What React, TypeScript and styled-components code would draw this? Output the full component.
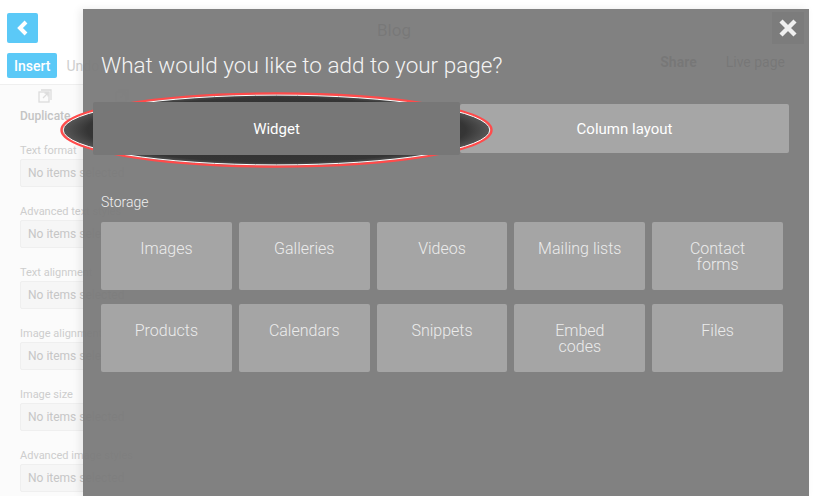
import React from 'react';
import styled, { createGlobalStyle } from 'styled-components';

const GlobalStyle = createGlobalStyle`
  html, body {
    margin: 0;
    padding: 0;
    background: #ffffff;
    font-family: Roboto, "Liberation Sans", Arial, sans-serif;
  }
`;

const Page = styled.div`
  position: relative;
  width: 813px;
  height: 496px;
  overflow: hidden;
  display: flex;
  background: #ffffff;
`;

const Sidebar = styled.div`
  width: 200px;
  flex-shrink: 0;
  background: #fbfbfb;
  display: flex;
  flex-direction: column;
`;

const SidebarTop = styled.div`
  background: #ffffff;
  padding: 13px 0 6px 7px;
  border-bottom: 1px solid #efefef;
  display: flex;
  flex-direction: column;
  gap: 10px;
`;

const BackButton = styled.div`
  width: 31px;
  height: 30px;
  border-radius: 2px;
  background: #5bc9f7;
  display: flex;
  align-items: center;
  justify-content: center;
`;

const ToolRow = styled.div`
  display: flex;
  align-items: center;
  gap: 9px;
`;

const InsertButton = styled.div`
  height: 25px;
  padding: 0 7px;
  border-radius: 2px;
  background: #5bc9f7;
  color: #ffffff;
  font-size: 14px;
  font-weight: 500;
  display: flex;
  align-items: center;
`;

const ToolText = styled.div`
  color: #cfcfcf;
  font-size: 14px;
`;

const ActionRow = styled.div`
  display: flex;
  gap: 34px;
  padding: 4px 0 0 20px;
`;

const Action = styled.div`
  display: flex;
  flex-direction: column;
  align-items: center;
  gap: 6px;
  color: #c4c4c4;
  font-size: 12px;
  font-weight: 500;
`;

const Fields = styled.div`
  display: flex;
  flex-direction: column;
  gap: 18px;
  padding: 21px 10px 0 20px;
`;

const Field = styled.div`
  display: flex;
  flex-direction: column;
  gap: 1px;
`;

const FieldLabel = styled.div`
  color: #cdcdcd;
  font-size: 11px;
  line-height: 14px;
`;

const FieldBox = styled.div`
  height: 26px;
  background: #f6f6f6;
  border: 1px solid #efefef;
  border-radius: 2px;
  padding-left: 7px;
  color: #c6c6c6;
  font-size: 12px;
  display: flex;
  align-items: center;
`;

const Main = styled.div`
  flex: 1;
  display: flex;
  flex-direction: column;
`;

const BlogTitle = styled.div`
  padding: 20px 0 0 177px;
  color: #555555;
  font-size: 17px;
  line-height: 20px;
`;

const HeaderLinks = styled.div`
  display: flex;
  justify-content: flex-end;
  gap: 29px;
  padding: 14px 28px 0 0;
  color: #444444;
  font-size: 14px;
`;

const HeaderLink = styled.span<{ $bold?: boolean }>`
  font-weight: ${(p) => (p.$bold ? 700 : 400)};
`;

const Overlay = styled.div`
  position: absolute;
  left: 83px;
  top: 9px;
  right: 4px;
  bottom: 0;
  background: rgba(122, 122, 122, 0.95);
  box-shadow: -3px 0 8px rgba(0, 0, 0, 0.08);
  padding: 42px 20px 0 18px;
  display: flex;
  flex-direction: column;
`;

const CloseButton = styled.div`
  position: absolute;
  top: 3px;
  right: 5px;
  width: 32px;
  height: 32px;
  background: rgba(0, 0, 0, 0.03);
  display: flex;
  align-items: center;
  justify-content: center;
`;

const Title = styled.div`
  color: #f4f4f4;
  font-size: 22.5px;
  font-weight: 300;
  line-height: 28px;
`;

const Tabs = styled.div`
  position: relative;
  display: flex;
  align-items: center;
  margin: 23px 0 0 -8px;
`;

const Tab = styled.div<{ $active?: boolean }>`
  position: relative;
  z-index: ${(p) => (p.$active ? 2 : 0)};
  height: ${(p) => (p.$active ? '53px' : '49px')};
  ${(p) => (p.$active ? 'width: 367px;' : 'flex: 1;')}
  background: ${(p) => (p.$active ? '#777777' : '#a6a6a6')};
  border-radius: 2px;
  color: #ffffff;
  font-size: 15px;
  display: flex;
  align-items: center;
  justify-content: center;
`;

const Highlight = styled.svg`
  position: absolute;
  left: -35px;
  top: -11px;
  z-index: 1;
  pointer-events: none;
`;

const SectionLabel = styled.div`
  margin-top: 38px;
  color: #f0f0f0;
  font-size: 14px;
  font-weight: 300;
  line-height: 18px;
`;

const Grid = styled.div`
  margin: 11px 6px 0 0;
  display: grid;
  grid-template-columns: repeat(5, 1fr);
  grid-auto-rows: 68px;
  gap: 14px 7px;
`;

const Tile = styled.div`
  background: #a5a5a5;
  border-radius: 2px;
  padding: 19px 20px 0;
  color: #ececec;
  font-size: 16px;
  font-weight: 300;
  line-height: 16px;
  text-align: center;
`;

const fields = [
  'Text format',
  'Advanced text styles',
  'Text alignment',
  'Image alignment',
  'Image size',
  'Advanced image styles',
];

const tiles = [
  'Images',
  'Galleries',
  'Videos',
  'Mailing lists',
  'Contact forms',
  'Products',
  'Calendars',
  'Snippets',
  'Embed codes',
  'Files',
];

const DuplicateIcon = () => (
  <svg width="14" height="14" viewBox="0 0 14 14" fill="none" stroke="#dcdcdc" strokeWidth="1.3">
    <rect x="1" y="3" width="10" height="10" />
    <path d="M3 1h10v10" />
    <path d="M5 9l5-5M6.5 4H10v3.5" />
  </svg>
);

export default function App() {
  return (
    <>
      <GlobalStyle />
      <Page>
        <Sidebar>
          <SidebarTop>
            <BackButton>
              <svg width="14" height="16" viewBox="0 0 14 16">
                <polyline points="10,2 4,8 10,14" fill="none" stroke="#ffffff" strokeWidth="4" strokeLinejoin="miter" />
              </svg>
            </BackButton>
            <ToolRow>
              <InsertButton>Insert</InsertButton>
              <ToolText>Undo</ToolText>
            </ToolRow>
          </SidebarTop>
          <ActionRow>
            <Action>
              <DuplicateIcon />
              Duplicate
            </Action>
            <Action>
              <DuplicateIcon />
              Delete
            </Action>
          </ActionRow>
          <Fields>
            {fields.map((f) => (
              <Field key={f}>
                <FieldLabel>{f}</FieldLabel>
                <FieldBox>No items selected</FieldBox>
              </Field>
            ))}
          </Fields>
        </Sidebar>
        <Main>
          <BlogTitle>Blog</BlogTitle>
          <HeaderLinks>
            <HeaderLink $bold>Share</HeaderLink>
            <HeaderLink>Live page</HeaderLink>
          </HeaderLinks>
        </Main>

        <Overlay>
          <CloseButton>
            <svg width="20" height="20" viewBox="0 0 20 20">
              <path d="M3 3L17 17M17 3L3 17" stroke="#f0f0f0" strokeWidth="4.4" strokeLinecap="butt" />
            </svg>
          </CloseButton>
          <Title>What would you like to add to your page?</Title>
          <Tabs>
            <Tab $active>Widget</Tab>
            <Tab>Column layout</Tab>
            <Highlight width="437" height="78" viewBox="0 0 437 78">
              <defs>
                <radialGradient id="spot" cx="50%" cy="50%" r="50%">
                  <stop offset="0%" stopColor="#2f2f2f" />
                  <stop offset="88%" stopColor="#353535" />
                  <stop offset="100%" stopColor="#5a5a5a" />
                </radialGradient>
              </defs>
              <ellipse cx="218.5" cy="39" rx="215" ry="36.5" fill="url(#spot)" stroke="#ff4b4b" strokeWidth="2.4" />
              <ellipse cx="218.5" cy="39" rx="213.3" ry="34.9" fill="none" stroke="#ffffff" strokeWidth="1" />
            </Highlight>
          </Tabs>
          <SectionLabel>Storage</SectionLabel>
          <Grid>
            {tiles.map((t) => (
              <Tile key={t}>{t}</Tile>
            ))}
          </Grid>
        </Overlay>
      </Page>
    </>
  );
}
